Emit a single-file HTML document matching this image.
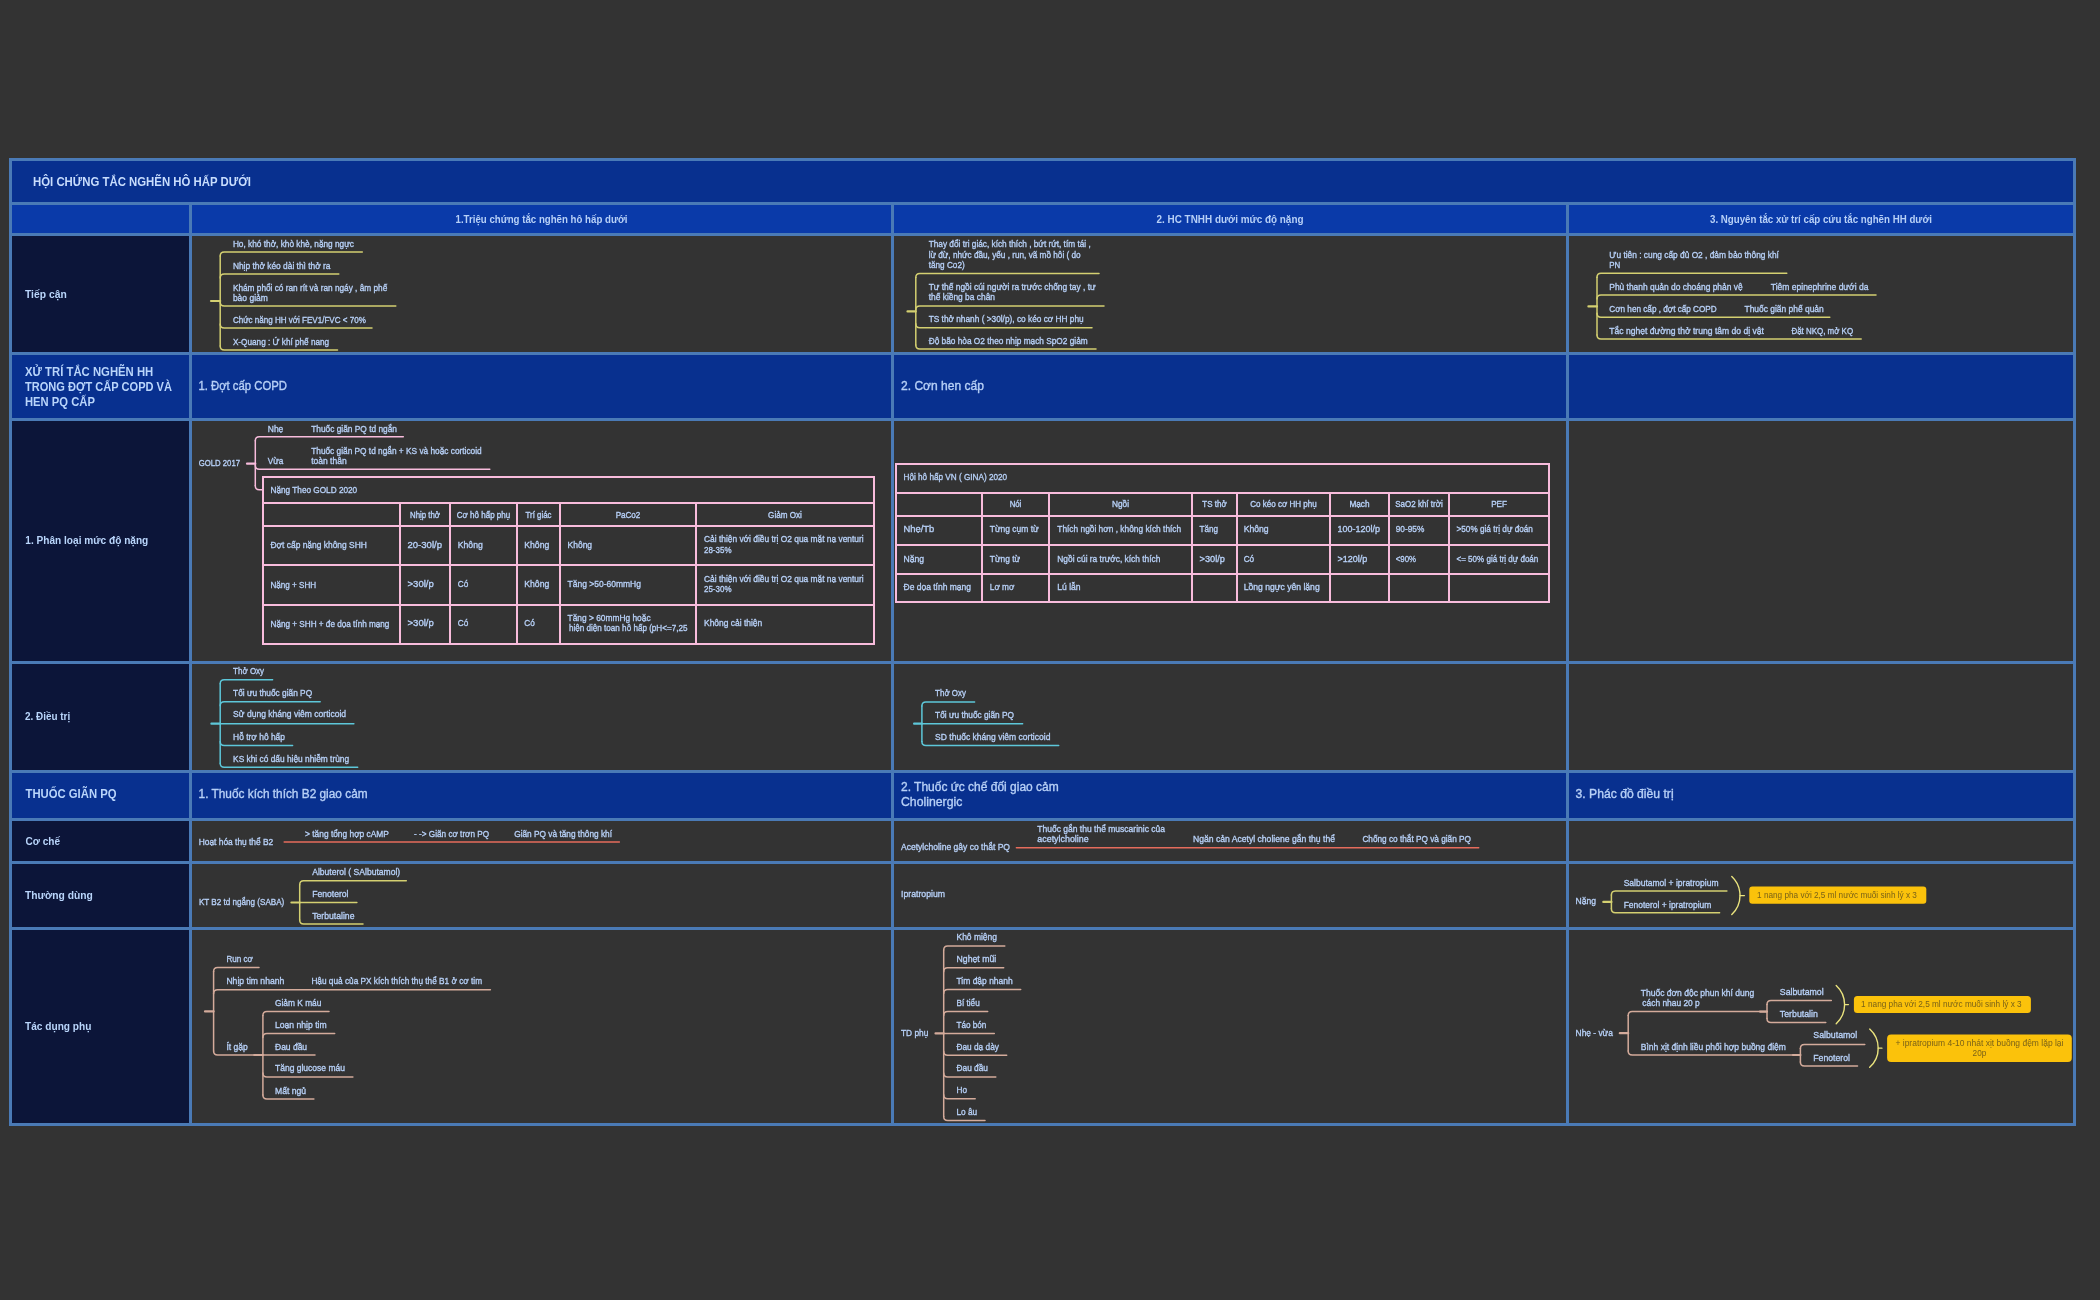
<!DOCTYPE html>
<html><head><meta charset="utf-8"><title>Hội chứng tắc nghẽn hô hấp dưới</title>
<style>
html,body{margin:0;padding:0;background:#333333;width:2100px;height:1300px;overflow:hidden}
svg{position:absolute;left:0;top:0;display:block;will-change:transform}
text{font-family:"Liberation Sans",sans-serif;fill:#b7d0f7;stroke:#b7d0f7;stroke-width:0.35px}
</style></head><body>
<svg width="2100" height="1300" viewBox="0 0 2100 1300">
<rect x="12" y="161" width="2061" height="41" fill="#08308f"/>
<rect x="12" y="205" width="2061" height="28" fill="#0a3aa9"/>
<rect x="12" y="355" width="2061" height="63" fill="#08308f"/>
<rect x="12" y="773" width="2061" height="45" fill="#08308f"/>
<rect x="12" y="236" width="177" height="116" fill="#0c1539"/>
<rect x="12" y="421" width="177" height="240" fill="#0c1539"/>
<rect x="12" y="664" width="177" height="106" fill="#0c1539"/>
<rect x="12" y="821" width="177" height="40" fill="#0c1539"/>
<rect x="12" y="864" width="177" height="63" fill="#0c1539"/>
<rect x="12" y="930" width="177" height="193" fill="#0c1539"/>
<rect x="9" y="158" width="2067" height="3" fill="#4a7ab6"/>
<rect x="9" y="202" width="2067" height="3" fill="#4a7ab6"/>
<rect x="9" y="233" width="2067" height="3" fill="#4a7ab6"/>
<rect x="9" y="352" width="2067" height="3" fill="#4a7ab6"/>
<rect x="9" y="418" width="2067" height="3" fill="#4a7ab6"/>
<rect x="9" y="661" width="2067" height="3" fill="#4a7ab6"/>
<rect x="9" y="770" width="2067" height="3" fill="#4a7ab6"/>
<rect x="9" y="818" width="2067" height="3" fill="#4a7ab6"/>
<rect x="9" y="861" width="2067" height="3" fill="#4a7ab6"/>
<rect x="9" y="927" width="2067" height="3" fill="#4a7ab6"/>
<rect x="9" y="1123" width="2067" height="3" fill="#4a7ab6"/>
<rect x="9" y="158" width="3" height="968" fill="#4a7ab6"/>
<rect x="2073" y="158" width="3" height="968" fill="#4a7ab6"/>
<rect x="189" y="202" width="3" height="924" fill="#4a7ab6"/>
<rect x="891" y="202" width="3" height="924" fill="#4a7ab6"/>
<rect x="1566" y="202" width="3" height="924" fill="#4a7ab6"/>
<text x="33.00" y="186.00" font-size="12.5" font-weight="700" style="fill:#c8ddfd;stroke:#c8ddfd;stroke-width:0" textLength="218.0" lengthAdjust="spacingAndGlyphs">HỘI CHỨNG TẮC NGHẼN HÔ HẤP DƯỚI</text>
<text x="541.50" y="223.00" font-size="10" font-weight="700" text-anchor="middle" style="stroke-width:0" textLength="172.0" lengthAdjust="spacingAndGlyphs">1.Triệu chứng tắc nghẽn hô hấp dưới</text>
<text x="1230.00" y="223.00" font-size="10" font-weight="700" text-anchor="middle" style="stroke-width:0" textLength="147.0" lengthAdjust="spacingAndGlyphs">2. HC TNHH dưới mức độ nặng</text>
<text x="1821.00" y="223.00" font-size="10" font-weight="700" text-anchor="middle" style="stroke-width:0" textLength="222.0" lengthAdjust="spacingAndGlyphs">3. Nguyên tắc xử trí cấp cứu tắc nghẽn HH dưới</text>
<text x="25.00" y="298.00" font-size="11" font-weight="700" style="fill:#b9d5fb;stroke:#b9d5fb;stroke-width:0" textLength="41.7" lengthAdjust="spacingAndGlyphs">Tiếp cận</text>
<text x="25.00" y="376.00" font-size="12.3" font-weight="700" style="fill:#b9d5fb;stroke:#b9d5fb;stroke-width:0" textLength="128.3" lengthAdjust="spacingAndGlyphs">XỬ TRÍ TẮC NGHẼN HH</text>
<text x="25.00" y="390.70" font-size="12.3" font-weight="700" style="fill:#b9d5fb;stroke:#b9d5fb;stroke-width:0" textLength="147.0" lengthAdjust="spacingAndGlyphs">TRONG ĐỢT CẤP COPD VÀ</text>
<text x="25.00" y="405.70" font-size="12.3" font-weight="700" style="fill:#b9d5fb;stroke:#b9d5fb;stroke-width:0" textLength="69.9" lengthAdjust="spacingAndGlyphs">HEN PQ CẤP</text>
<text x="25.30" y="543.80" font-size="10.8" font-weight="700" style="fill:#b9d5fb;stroke:#b9d5fb;stroke-width:0" textLength="123.0" lengthAdjust="spacingAndGlyphs">1. Phân loại mức độ nặng</text>
<text x="25.00" y="719.80" font-size="11" font-weight="700" style="fill:#b9d5fb;stroke:#b9d5fb;stroke-width:0" textLength="45.2" lengthAdjust="spacingAndGlyphs">2. Điều trị</text>
<text x="25.50" y="798.40" font-size="12" font-weight="700" style="fill:#b9d5fb;stroke:#b9d5fb;stroke-width:0" textLength="91.0" lengthAdjust="spacingAndGlyphs">THUỐC GIÃN PQ</text>
<text x="25.50" y="845.00" font-size="11" font-weight="700" style="fill:#b9d5fb;stroke:#b9d5fb;stroke-width:0" textLength="34.5" lengthAdjust="spacingAndGlyphs">Cơ chế</text>
<text x="25.00" y="898.80" font-size="11" font-weight="700" style="fill:#b9d5fb;stroke:#b9d5fb;stroke-width:0" textLength="67.9" lengthAdjust="spacingAndGlyphs">Thường dùng</text>
<text x="25.00" y="1029.80" font-size="11" font-weight="700" style="fill:#b9d5fb;stroke:#b9d5fb;stroke-width:0" textLength="66.4" lengthAdjust="spacingAndGlyphs">Tác dụng phụ</text>
<text x="198.40" y="389.60" font-size="12" textLength="88.6" lengthAdjust="spacingAndGlyphs">1. Đợt cấp COPD</text>
<text x="901.00" y="389.70" font-size="12" textLength="82.9" lengthAdjust="spacingAndGlyphs">2. Cơn hen  cấp</text>
<text x="198.60" y="798.40" font-size="12" textLength="169.0" lengthAdjust="spacingAndGlyphs">1. Thuốc kích thích B2 giao cảm</text>
<text x="901.00" y="790.60" font-size="12" textLength="157.7" lengthAdjust="spacingAndGlyphs">2. Thuốc ức chế đối giao cảm</text>
<text x="901.00" y="805.70" font-size="12" textLength="61.4" lengthAdjust="spacingAndGlyphs">Cholinergic</text>
<text x="1575.60" y="798.20" font-size="12" textLength="98.0" lengthAdjust="spacingAndGlyphs">3. Phác đồ điều trị</text>
<path d="M211,301 L220.2,301" stroke="#d4d071" stroke-width="2.2" fill="none" stroke-linecap="round"/>
<path d="M220.2,256 L220.2,346" stroke="#d4d071" stroke-width="1.5" fill="none" stroke-linecap="round"/>
<path d="M220.2,256 Q220.2,252 224.2,252 L362.3,252" stroke="#d4d071" stroke-width="1.5" fill="none" stroke-linecap="round"/>
<path d="M220.2,278 Q220.2,274 224.2,274 L338.8,274" stroke="#d4d071" stroke-width="1.5" fill="none" stroke-linecap="round"/>
<path d="M220.2,302 Q220.2,306 224.2,306 L395.8,306" stroke="#d4d071" stroke-width="1.5" fill="none" stroke-linecap="round"/>
<path d="M220.2,324 Q220.2,328 224.2,328 L372,328" stroke="#d4d071" stroke-width="1.5" fill="none" stroke-linecap="round"/>
<path d="M220.2,346 Q220.2,350 224.2,350 L337.5,350" stroke="#d4d071" stroke-width="1.5" fill="none" stroke-linecap="round"/>
<text x="232.90" y="247.30" font-size="9.5" textLength="121.0" lengthAdjust="spacingAndGlyphs">Ho, khó thở, khò khè, nặng ngực</text>
<text x="232.90" y="269.00" font-size="9.5" textLength="97.6" lengthAdjust="spacingAndGlyphs">Nhịp thở kéo dài thì thở ra</text>
<text x="232.90" y="291.00" font-size="9.5" textLength="154.4" lengthAdjust="spacingAndGlyphs">Khám phổi có ran rít và ran ngáy , âm phế</text>
<text x="232.90" y="300.90" font-size="9.5" textLength="35.0" lengthAdjust="spacingAndGlyphs">bào giảm</text>
<text x="232.90" y="322.90" font-size="9.5" textLength="132.9" lengthAdjust="spacingAndGlyphs">Chức năng HH với FEV1/FVC &lt; 70%</text>
<text x="232.90" y="344.90" font-size="9.5" textLength="96.3" lengthAdjust="spacingAndGlyphs">X-Quang : Ứ khí phế nang</text>
<path d="M907.5,311.4 L915.8,311.4" stroke="#d4d071" stroke-width="2.2" fill="none" stroke-linecap="round"/>
<path d="M915.8,277.5 L915.8,345" stroke="#d4d071" stroke-width="1.5" fill="none" stroke-linecap="round"/>
<path d="M915.8,277.5 Q915.8,273.5 919.8,273.5 L1099,273.5" stroke="#d4d071" stroke-width="1.5" fill="none" stroke-linecap="round"/>
<path d="M915.8,310 Q915.8,306 919.8,306 L1104,306" stroke="#d4d071" stroke-width="1.5" fill="none" stroke-linecap="round"/>
<path d="M915.8,323.7 Q915.8,327.7 919.8,327.7 L1092,327.7" stroke="#d4d071" stroke-width="1.5" fill="none" stroke-linecap="round"/>
<path d="M915.8,345 Q915.8,349 919.8,349 L1096,349" stroke="#d4d071" stroke-width="1.5" fill="none" stroke-linecap="round"/>
<text x="928.70" y="247.00" font-size="9.5" textLength="162.0" lengthAdjust="spacingAndGlyphs">Thay đổi tri giác, kích thích , bứt rứt, tím tái ,</text>
<text x="928.70" y="257.70" font-size="9.5" textLength="152.0" lengthAdjust="spacingAndGlyphs">lừ đừ, nhức đầu, yếu , run, vã mồ hôi ( do</text>
<text x="928.70" y="267.50" font-size="9.5" textLength="36.0" lengthAdjust="spacingAndGlyphs">tăng Co2)</text>
<text x="928.70" y="290.20" font-size="9.5" textLength="167.0" lengthAdjust="spacingAndGlyphs">Tư thế ngồi cúi người ra trước chống tay , tư</text>
<text x="928.70" y="299.70" font-size="9.5" textLength="66.3" lengthAdjust="spacingAndGlyphs">thế kiềng ba chân</text>
<text x="928.70" y="321.70" font-size="9.5" textLength="155.0" lengthAdjust="spacingAndGlyphs">TS thở nhanh ( &gt;30l/p), co kéo cơ HH phụ</text>
<text x="928.70" y="343.70" font-size="9.5" textLength="159.0" lengthAdjust="spacingAndGlyphs">Độ bão hòa O2 theo nhịp mạch SpO2 giảm</text>
<path d="M1588.4,306.4 L1597,306.4" stroke="#d4d071" stroke-width="2.2" fill="none" stroke-linecap="round"/>
<path d="M1597,277.3 L1597,335" stroke="#d4d071" stroke-width="1.5" fill="none" stroke-linecap="round"/>
<path d="M1597,277.3 Q1597,273.3 1601,273.3 L1786.8,273.3" stroke="#d4d071" stroke-width="1.5" fill="none" stroke-linecap="round"/>
<path d="M1597,299.1 Q1597,295.1 1601,295.1 L1876,295.1" stroke="#d4d071" stroke-width="1.5" fill="none" stroke-linecap="round"/>
<path d="M1597,313.2 Q1597,317.2 1601,317.2 L1829.8,317.2" stroke="#d4d071" stroke-width="1.5" fill="none" stroke-linecap="round"/>
<path d="M1597,335 Q1597,339 1601,339 L1861.2,339" stroke="#d4d071" stroke-width="1.5" fill="none" stroke-linecap="round"/>
<text x="1609.30" y="258.10" font-size="9.5" textLength="169.6" lengthAdjust="spacingAndGlyphs">Ưu tiên : cung cấp đủ O2 , đảm bảo thông khí</text>
<text x="1609.30" y="267.50" font-size="9.5" textLength="11.0" lengthAdjust="spacingAndGlyphs">PN</text>
<text x="1609.30" y="289.60" font-size="9.5" textLength="133.3" lengthAdjust="spacingAndGlyphs">Phù thanh quản do choáng phản vệ</text>
<text x="1770.80" y="289.60" font-size="9.5" textLength="97.6" lengthAdjust="spacingAndGlyphs">Tiêm epinephrine dưới da</text>
<text x="1609.30" y="311.70" font-size="9.5" textLength="107.4" lengthAdjust="spacingAndGlyphs">Cơn hen cấp , đợt cấp COPD</text>
<text x="1744.50" y="311.70" font-size="9.5" textLength="79.2" lengthAdjust="spacingAndGlyphs">Thuốc giãn phế quản</text>
<text x="1609.30" y="333.50" font-size="9.5" textLength="154.7" lengthAdjust="spacingAndGlyphs">Tắc nghẹt đường thở trung tâm do dị vật</text>
<text x="1791.40" y="333.50" font-size="9.5" textLength="61.7" lengthAdjust="spacingAndGlyphs">Đặt NKQ, mở KQ</text>
<text x="198.70" y="465.80" font-size="9.5" textLength="41.3" lengthAdjust="spacingAndGlyphs">GOLD 2017</text>
<path d="M247,463.7 L255.3,463.7" stroke="#f8bcdc" stroke-width="2.2" fill="none" stroke-linecap="round"/>
<path d="M255.3,440.7 L255.3,485.7" stroke="#f8bcdc" stroke-width="1.5" fill="none" stroke-linecap="round"/>
<path d="M255.3,440.7 Q255.3,436.7 259.3,436.7 L403.3,436.7" stroke="#f8bcdc" stroke-width="1.5" fill="none" stroke-linecap="round"/>
<path d="M255.3,465.2 Q255.3,469.2 259.3,469.2 L489.8,469.2" stroke="#f8bcdc" stroke-width="1.5" fill="none" stroke-linecap="round"/>
<path d="M255.3,485.7 Q255.3,489.7 259.3,489.7 L262,489.7" stroke="#f8bcdc" stroke-width="1.5" fill="none" stroke-linecap="round"/>
<text x="267.80" y="432.00" font-size="9.5" textLength="15.5" lengthAdjust="spacingAndGlyphs">Nhẹ</text>
<text x="311.20" y="432.00" font-size="9.5" textLength="85.8" lengthAdjust="spacingAndGlyphs">Thuốc giãn PQ td ngắn</text>
<text x="267.80" y="464.00" font-size="9.5" textLength="15.5" lengthAdjust="spacingAndGlyphs">Vừa</text>
<text x="311.20" y="454.20" font-size="9.5" textLength="170.5" lengthAdjust="spacingAndGlyphs">Thuốc giãn PQ td ngắn + KS và hoặc corticoid</text>
<text x="311.20" y="464.20" font-size="9.5" textLength="35.5" lengthAdjust="spacingAndGlyphs">toàn thân</text>
<rect x="262" y="476" width="613" height="2" fill="#f8bcdc"/>
<rect x="262" y="502" width="613" height="2" fill="#f8bcdc"/>
<rect x="262" y="525" width="613" height="2" fill="#f8bcdc"/>
<rect x="262" y="564" width="613" height="2" fill="#f8bcdc"/>
<rect x="262" y="604" width="613" height="2" fill="#f8bcdc"/>
<rect x="262" y="643" width="613" height="2" fill="#f8bcdc"/>
<rect x="262" y="476" width="2" height="169" fill="#f8bcdc"/>
<rect x="873" y="476" width="2" height="169" fill="#f8bcdc"/>
<rect x="399" y="502" width="2" height="143" fill="#f8bcdc"/>
<rect x="449" y="502" width="2" height="143" fill="#f8bcdc"/>
<rect x="516" y="502" width="2" height="143" fill="#f8bcdc"/>
<rect x="559" y="502" width="2" height="143" fill="#f8bcdc"/>
<rect x="695" y="502" width="2" height="143" fill="#f8bcdc"/>
<text x="270.50" y="493.20" font-size="9.5" textLength="86.7" lengthAdjust="spacingAndGlyphs">Nặng Theo GOLD 2020</text>
<text x="425.00" y="518.10" font-size="8.5" text-anchor="middle" textLength="30.0" lengthAdjust="spacingAndGlyphs">Nhịp thở</text>
<text x="483.50" y="518.10" font-size="8.5" text-anchor="middle" textLength="53.4" lengthAdjust="spacingAndGlyphs">Cơ hô hấp phụ</text>
<text x="538.50" y="518.10" font-size="8.5" text-anchor="middle" textLength="25.9" lengthAdjust="spacingAndGlyphs">Trí giác</text>
<text x="628.00" y="518.10" font-size="8.5" text-anchor="middle" textLength="24.7" lengthAdjust="spacingAndGlyphs">PaCo2</text>
<text x="785.00" y="518.10" font-size="8.5" text-anchor="middle" textLength="33.8" lengthAdjust="spacingAndGlyphs">Giảm Oxi</text>
<text x="270.50" y="548.30" font-size="9.5" textLength="96.3" lengthAdjust="spacingAndGlyphs">Đợt cấp nặng không SHH</text>
<text x="407.50" y="547.50" font-size="9.5" textLength="34.5" lengthAdjust="spacingAndGlyphs">20-30l/p</text>
<text x="457.80" y="547.50" font-size="9.5" textLength="25.0" lengthAdjust="spacingAndGlyphs">Không</text>
<text x="524.30" y="547.50" font-size="9.5" textLength="25.0" lengthAdjust="spacingAndGlyphs">Không</text>
<text x="567.60" y="547.50" font-size="9.5" textLength="24.5" lengthAdjust="spacingAndGlyphs">Không</text>
<text x="704.00" y="541.50" font-size="9.5" textLength="159.6" lengthAdjust="spacingAndGlyphs">Cải thiện với điều trị O2 qua mặt nạ venturi</text>
<text x="704.00" y="552.50" font-size="9.5" textLength="27.5" lengthAdjust="spacingAndGlyphs">28-35%</text>
<text x="270.50" y="587.50" font-size="9.5" textLength="45.7" lengthAdjust="spacingAndGlyphs">Nặng + SHH</text>
<text x="407.50" y="586.70" font-size="9.5" textLength="26.3" lengthAdjust="spacingAndGlyphs">&gt;30l/p</text>
<text x="457.80" y="586.70" font-size="9.5" textLength="10.5" lengthAdjust="spacingAndGlyphs">Có</text>
<text x="524.30" y="586.70" font-size="9.5" textLength="25.0" lengthAdjust="spacingAndGlyphs">Không</text>
<text x="567.60" y="586.70" font-size="9.5" textLength="73.3" lengthAdjust="spacingAndGlyphs">Tăng &gt;50-60mmHg</text>
<text x="704.00" y="581.60" font-size="9.5" textLength="159.6" lengthAdjust="spacingAndGlyphs">Cải thiện với điều trị O2 qua mặt nạ venturi</text>
<text x="704.00" y="591.90" font-size="9.5" textLength="27.5" lengthAdjust="spacingAndGlyphs">25-30%</text>
<text x="270.50" y="626.50" font-size="9.5" textLength="118.9" lengthAdjust="spacingAndGlyphs">Nặng + SHH + đe dọa tính mạng</text>
<text x="407.50" y="625.70" font-size="9.5" textLength="26.3" lengthAdjust="spacingAndGlyphs">&gt;30l/p</text>
<text x="457.80" y="625.70" font-size="9.5" textLength="10.5" lengthAdjust="spacingAndGlyphs">Có</text>
<text x="524.30" y="625.70" font-size="9.5" textLength="10.5" lengthAdjust="spacingAndGlyphs">Có</text>
<text x="567.60" y="621.00" font-size="9.5" textLength="83.0" lengthAdjust="spacingAndGlyphs">Tăng &gt; 60mmHg hoặc</text>
<text x="569.00" y="631.20" font-size="9.5" textLength="118.4" lengthAdjust="spacingAndGlyphs">hiện diện toan hô hấp (pH&lt;=7,25</text>
<text x="704.00" y="625.70" font-size="9.5" textLength="58.2" lengthAdjust="spacingAndGlyphs">Không cải thiện</text>
<rect x="895" y="463" width="655" height="2" fill="#f8bcdc"/>
<rect x="895" y="492" width="655" height="2" fill="#f8bcdc"/>
<rect x="895" y="515" width="655" height="2" fill="#f8bcdc"/>
<rect x="895" y="544" width="655" height="2" fill="#f8bcdc"/>
<rect x="895" y="573" width="655" height="2" fill="#f8bcdc"/>
<rect x="895" y="601" width="655" height="2" fill="#f8bcdc"/>
<rect x="895" y="463" width="2" height="140" fill="#f8bcdc"/>
<rect x="1548" y="463" width="2" height="140" fill="#f8bcdc"/>
<rect x="981" y="492" width="2" height="111" fill="#f8bcdc"/>
<rect x="1048" y="492" width="2" height="111" fill="#f8bcdc"/>
<rect x="1191" y="492" width="2" height="111" fill="#f8bcdc"/>
<rect x="1236" y="492" width="2" height="111" fill="#f8bcdc"/>
<rect x="1329" y="492" width="2" height="111" fill="#f8bcdc"/>
<rect x="1388" y="492" width="2" height="111" fill="#f8bcdc"/>
<rect x="1448" y="492" width="2" height="111" fill="#f8bcdc"/>
<text x="903.50" y="480.00" font-size="9.5" textLength="103.6" lengthAdjust="spacingAndGlyphs">Hội hô hấp VN ( GINA) 2020</text>
<text x="1015.50" y="506.80" font-size="8.5" text-anchor="middle" textLength="11.7" lengthAdjust="spacingAndGlyphs">Nói</text>
<text x="1120.50" y="506.80" font-size="8.5" text-anchor="middle" textLength="17.0" lengthAdjust="spacingAndGlyphs">Ngồi</text>
<text x="1214.50" y="506.80" font-size="8.5" text-anchor="middle" textLength="24.3" lengthAdjust="spacingAndGlyphs">TS thở</text>
<text x="1283.50" y="506.80" font-size="8.5" text-anchor="middle" textLength="66.4" lengthAdjust="spacingAndGlyphs">Co kéo cơ HH phụ</text>
<text x="1359.50" y="506.80" font-size="8.5" text-anchor="middle" textLength="20.1" lengthAdjust="spacingAndGlyphs">Mạch</text>
<text x="1419.00" y="506.80" font-size="8.5" text-anchor="middle" textLength="47.4" lengthAdjust="spacingAndGlyphs">SaO2 khí trời</text>
<text x="1499.00" y="506.80" font-size="8.5" text-anchor="middle" textLength="15.7" lengthAdjust="spacingAndGlyphs">PEF</text>
<text x="903.50" y="532.40" font-size="9.5" textLength="30.8" lengthAdjust="spacingAndGlyphs">Nhẹ/Tb</text>
<text x="989.80" y="532.40" font-size="9.5" textLength="48.9" lengthAdjust="spacingAndGlyphs">Từng cụm từ</text>
<text x="1057.30" y="532.40" font-size="9.5" textLength="123.9" lengthAdjust="spacingAndGlyphs">Thích ngồi hơn , không kích thích</text>
<text x="1199.50" y="532.40" font-size="9.5" textLength="18.6" lengthAdjust="spacingAndGlyphs">Tăng</text>
<text x="1243.70" y="532.40" font-size="9.5" textLength="25.0" lengthAdjust="spacingAndGlyphs">Không</text>
<text x="1337.40" y="532.40" font-size="9.5" textLength="42.5" lengthAdjust="spacingAndGlyphs">100-120l/p</text>
<text x="1395.70" y="532.40" font-size="9.5" textLength="28.6" lengthAdjust="spacingAndGlyphs">90-95%</text>
<text x="1456.50" y="532.40" font-size="9.5" textLength="76.4" lengthAdjust="spacingAndGlyphs">&gt;50% giá trị dự đoán</text>
<text x="903.50" y="561.50" font-size="9.5" textLength="20.6" lengthAdjust="spacingAndGlyphs">Nặng</text>
<text x="989.80" y="561.50" font-size="9.5" textLength="30.3" lengthAdjust="spacingAndGlyphs">Từng từ</text>
<text x="1057.30" y="561.50" font-size="9.5" textLength="103.1" lengthAdjust="spacingAndGlyphs">Ngồi cúi ra trước, kích thích</text>
<text x="1199.50" y="561.50" font-size="9.5" textLength="25.4" lengthAdjust="spacingAndGlyphs">&gt;30l/p</text>
<text x="1243.70" y="561.50" font-size="9.5" textLength="10.5" lengthAdjust="spacingAndGlyphs">Có</text>
<text x="1337.40" y="561.50" font-size="9.5" textLength="29.9" lengthAdjust="spacingAndGlyphs">&gt;120l/p</text>
<text x="1395.70" y="561.50" font-size="9.5" textLength="20.4" lengthAdjust="spacingAndGlyphs">&lt;90%</text>
<text x="1456.50" y="561.50" font-size="9.5" textLength="81.8" lengthAdjust="spacingAndGlyphs">&lt;= 50% giá trị dự đoán</text>
<text x="903.50" y="590.40" font-size="9.5" textLength="67.5" lengthAdjust="spacingAndGlyphs">Đe dọa tính mạng</text>
<text x="989.80" y="590.40" font-size="9.5" textLength="24.6" lengthAdjust="spacingAndGlyphs">Lơ mơ</text>
<text x="1057.30" y="590.40" font-size="9.5" textLength="23.2" lengthAdjust="spacingAndGlyphs">Lú lẫn</text>
<text x="1243.70" y="590.40" font-size="9.5" textLength="76.0" lengthAdjust="spacingAndGlyphs">Lồng ngực yên lặng</text>
<path d="M211.4,723.7 L220.2,723.7" stroke="#5dc7d9" stroke-width="2.2" fill="none" stroke-linecap="round"/>
<path d="M220.2,683.8 L220.2,763.2" stroke="#5dc7d9" stroke-width="1.5" fill="none" stroke-linecap="round"/>
<path d="M220.2,683.8 Q220.2,679.8 224.2,679.8 L272.6,679.8" stroke="#5dc7d9" stroke-width="1.5" fill="none" stroke-linecap="round"/>
<path d="M220.2,705.8 Q220.2,701.8 224.2,701.8 L320.2,701.8" stroke="#5dc7d9" stroke-width="1.5" fill="none" stroke-linecap="round"/>
<path d="M220.2,723.7 L353.9,723.7" stroke="#5dc7d9" stroke-width="1.5" fill="none" stroke-linecap="round"/>
<path d="M220.2,741.6 Q220.2,745.6 224.2,745.6 L292.6,745.6" stroke="#5dc7d9" stroke-width="1.5" fill="none" stroke-linecap="round"/>
<path d="M220.2,763.2 Q220.2,767.2 224.2,767.2 L357.7,767.2" stroke="#5dc7d9" stroke-width="1.5" fill="none" stroke-linecap="round"/>
<text x="233.10" y="673.90" font-size="9.5" textLength="31.0" lengthAdjust="spacingAndGlyphs">Thở Oxy</text>
<text x="233.10" y="695.50" font-size="9.5" textLength="79.0" lengthAdjust="spacingAndGlyphs">Tối ưu thuốc giãn PQ</text>
<text x="233.10" y="717.40" font-size="9.5" textLength="113.0" lengthAdjust="spacingAndGlyphs">Sử dụng kháng viêm corticoid</text>
<text x="233.10" y="739.60" font-size="9.5" textLength="51.9" lengthAdjust="spacingAndGlyphs">Hỗ trợ hô hấp</text>
<text x="233.10" y="761.50" font-size="9.5" textLength="116.0" lengthAdjust="spacingAndGlyphs">KS khi có dấu hiệu nhiễm trùng</text>
<path d="M914.1,723.7 L921.9,723.7" stroke="#5dc7d9" stroke-width="2.2" fill="none" stroke-linecap="round"/>
<path d="M921.9,706 L921.9,741.5" stroke="#5dc7d9" stroke-width="1.5" fill="none" stroke-linecap="round"/>
<path d="M921.9,706 Q921.9,702 925.9,702 L974.6,702" stroke="#5dc7d9" stroke-width="1.5" fill="none" stroke-linecap="round"/>
<path d="M921.9,723.7 L1022.6,723.7" stroke="#5dc7d9" stroke-width="1.5" fill="none" stroke-linecap="round"/>
<path d="M921.9,741.5 Q921.9,745.5 925.9,745.5 L1058.7,745.5" stroke="#5dc7d9" stroke-width="1.5" fill="none" stroke-linecap="round"/>
<text x="935.10" y="696.00" font-size="9.5" textLength="30.9" lengthAdjust="spacingAndGlyphs">Thở Oxy</text>
<text x="935.10" y="717.70" font-size="9.5" textLength="78.9" lengthAdjust="spacingAndGlyphs">Tối ưu thuốc giãn PQ</text>
<text x="935.10" y="739.50" font-size="9.5" textLength="115.3" lengthAdjust="spacingAndGlyphs">SD thuốc kháng viêm corticoid</text>
<text x="198.70" y="844.80" font-size="9.5" textLength="74.6" lengthAdjust="spacingAndGlyphs">Hoạt hóa thụ thể B2</text>
<path d="M284.2,842.1 L619.4,842.1" stroke="#e66c5c" stroke-width="1.5" fill="none" stroke-linecap="round"/>
<text x="305.10" y="836.90" font-size="9.5" textLength="83.8" lengthAdjust="spacingAndGlyphs">&gt; tăng tổng hợp cAMP</text>
<text x="414.10" y="836.90" font-size="9.5" textLength="75.0" lengthAdjust="spacingAndGlyphs">- -&gt; Giãn cơ trơn PQ</text>
<text x="514.20" y="836.90" font-size="9.5" textLength="97.8" lengthAdjust="spacingAndGlyphs">Giãn PQ và tăng thông khí</text>
<text x="901.00" y="849.80" font-size="9.5" textLength="109.0" lengthAdjust="spacingAndGlyphs">Acetylcholine gây co thắt PQ</text>
<path d="M1016.4,847.7 L1478.7,847.7" stroke="#e66c5c" stroke-width="1.5" fill="none" stroke-linecap="round"/>
<text x="1037.30" y="832.20" font-size="9.5" textLength="127.7" lengthAdjust="spacingAndGlyphs">Thuốc gắn thu thể muscarinic của</text>
<text x="1037.30" y="842.20" font-size="9.5" textLength="51.4" lengthAdjust="spacingAndGlyphs">acetylcholine</text>
<text x="1193.00" y="842.20" font-size="9.5" textLength="142.0" lengthAdjust="spacingAndGlyphs">Ngăn cản Acetyl choliene gắn thụ thể</text>
<text x="1362.40" y="842.20" font-size="9.5" textLength="108.6" lengthAdjust="spacingAndGlyphs">Chống co thắt PQ và giãn PQ</text>
<text x="198.90" y="904.60" font-size="9.5" textLength="85.4" lengthAdjust="spacingAndGlyphs">KT B2 td ngắng (SABA)</text>
<path d="M291.4,902.5 L299.7,902.5" stroke="#d4d071" stroke-width="2.2" fill="none" stroke-linecap="round"/>
<path d="M299.7,884.7 L299.7,920.1" stroke="#d4d071" stroke-width="1.5" fill="none" stroke-linecap="round"/>
<path d="M299.7,884.7 Q299.7,880.7 303.7,880.7 L406.3,880.7" stroke="#d4d071" stroke-width="1.5" fill="none" stroke-linecap="round"/>
<path d="M299.7,902.5 L356.9,902.5" stroke="#d4d071" stroke-width="1.5" fill="none" stroke-linecap="round"/>
<path d="M299.7,920.1 Q299.7,924.1 303.7,924.1 L363,924.1" stroke="#d4d071" stroke-width="1.5" fill="none" stroke-linecap="round"/>
<text x="312.20" y="874.50" font-size="9.5" textLength="88.0" lengthAdjust="spacingAndGlyphs">Albuterol ( SAlbutamol)</text>
<text x="312.20" y="896.80" font-size="9.5" textLength="36.3" lengthAdjust="spacingAndGlyphs">Fenoterol</text>
<text x="312.20" y="918.50" font-size="9.5" textLength="42.3" lengthAdjust="spacingAndGlyphs">Terbutaline</text>
<text x="901.00" y="896.80" font-size="9.5" textLength="44.0" lengthAdjust="spacingAndGlyphs">Ipratropium</text>
<text x="1575.60" y="904.30" font-size="9.5" textLength="20.4" lengthAdjust="spacingAndGlyphs">Nặng</text>
<path d="M1603.3,901.9 L1611.4,901.9" stroke="#d4d071" stroke-width="2.2" fill="none" stroke-linecap="round"/>
<path d="M1611.4,895.1 L1611.4,908.8" stroke="#d4d071" stroke-width="1.5" fill="none" stroke-linecap="round"/>
<path d="M1611.4,895.1 Q1611.4,891.1 1615.4,891.1 L1726.9,891.1" stroke="#d4d071" stroke-width="1.5" fill="none" stroke-linecap="round"/>
<path d="M1611.4,908.8 Q1611.4,912.8 1615.4,912.8 L1719.6,912.8" stroke="#d4d071" stroke-width="1.5" fill="none" stroke-linecap="round"/>
<text x="1623.70" y="886.00" font-size="9.5" textLength="94.8" lengthAdjust="spacingAndGlyphs">Salbutamol + ipratropium</text>
<text x="1623.70" y="907.70" font-size="9.5" textLength="87.6" lengthAdjust="spacingAndGlyphs">Fenoterol + ipratropium</text>
<path d="M1731.8,876.6 A26.11,26.11 0 0 1 1731.8,914.6" stroke="#ebe47e" stroke-width="1.4" fill="none" stroke-linecap="round"/>
<path d="M1740,895.6 L1744.4,895.6" stroke="#ebe47e" stroke-width="1.4" fill="none" stroke-linecap="round"/>
<rect x="1749.3" y="886.4" width="177" height="17.3" rx="3" fill="#fbc20b"/>
<text x="1757.10" y="897.90" font-size="9.5" style="fill:#7a6218;stroke:#7a6218;stroke-width:0" textLength="159.8" lengthAdjust="spacingAndGlyphs">1 nang pha với 2,5 ml nước muối sinh lý x 3</text>
<path d="M205,1011.4 L213.6,1011.4" stroke="#d4ab9b" stroke-width="2.2" fill="none" stroke-linecap="round"/>
<path d="M213.6,971.6 L213.6,1051" stroke="#d4ab9b" stroke-width="1.5" fill="none" stroke-linecap="round"/>
<path d="M213.6,971.6 Q213.6,967.6 217.6,967.6 L259,967.6" stroke="#d4ab9b" stroke-width="1.5" fill="none" stroke-linecap="round"/>
<path d="M213.6,993.7 Q213.6,989.7 217.6,989.7 L490.4,989.7" stroke="#d4ab9b" stroke-width="1.5" fill="none" stroke-linecap="round"/>
<path d="M213.6,1051 Q213.6,1055 217.6,1055 L262.9,1055" stroke="#d4ab9b" stroke-width="1.5" fill="none" stroke-linecap="round"/>
<text x="226.40" y="962.10" font-size="9.5" textLength="26.4" lengthAdjust="spacingAndGlyphs">Run cơ</text>
<text x="226.40" y="984.00" font-size="9.5" textLength="57.9" lengthAdjust="spacingAndGlyphs">Nhịp tim nhanh</text>
<text x="311.40" y="984.00" font-size="9.5" textLength="170.7" lengthAdjust="spacingAndGlyphs">Hậu quả của PX kích thích thụ thể B1 ở cơ tim</text>
<text x="226.40" y="1050.00" font-size="9.5" textLength="21.4" lengthAdjust="spacingAndGlyphs">Ít gặp</text>
<path d="M254.3,1055 L262.9,1055" stroke="#d4ab9b" stroke-width="2.2" fill="none" stroke-linecap="round"/>
<path d="M262.9,1015.4 L262.9,1094.9" stroke="#d4ab9b" stroke-width="1.5" fill="none" stroke-linecap="round"/>
<path d="M262.9,1015.4 Q262.9,1011.4 266.9,1011.4 L329,1011.4" stroke="#d4ab9b" stroke-width="1.5" fill="none" stroke-linecap="round"/>
<path d="M262.9,1037.6 Q262.9,1033.6 266.9,1033.6 L334.7,1033.6" stroke="#d4ab9b" stroke-width="1.5" fill="none" stroke-linecap="round"/>
<path d="M262.9,1055 L315,1055" stroke="#d4ab9b" stroke-width="1.5" fill="none" stroke-linecap="round"/>
<path d="M262.9,1073.1 Q262.9,1077.1 266.9,1077.1 L352.9,1077.1" stroke="#d4ab9b" stroke-width="1.5" fill="none" stroke-linecap="round"/>
<path d="M262.9,1094.9 Q262.9,1098.9 266.9,1098.9 L313.9,1098.9" stroke="#d4ab9b" stroke-width="1.5" fill="none" stroke-linecap="round"/>
<text x="275.00" y="1005.70" font-size="9.5" textLength="46.4" lengthAdjust="spacingAndGlyphs">Giảm K máu</text>
<text x="275.00" y="1027.90" font-size="9.5" textLength="51.7" lengthAdjust="spacingAndGlyphs">Loạn nhịp tim</text>
<text x="275.00" y="1050.00" font-size="9.5" textLength="32.1" lengthAdjust="spacingAndGlyphs">Đau đầu</text>
<text x="275.00" y="1071.40" font-size="9.5" textLength="70.0" lengthAdjust="spacingAndGlyphs">Tăng glucose máu</text>
<text x="275.00" y="1093.60" font-size="9.5" textLength="31.1" lengthAdjust="spacingAndGlyphs">Mất ngủ</text>
<text x="901.00" y="1035.70" font-size="9.5" textLength="27.3" lengthAdjust="spacingAndGlyphs">TD phụ</text>
<path d="M935.5,1033.4 L943.7,1033.4" stroke="#d4ab9b" stroke-width="2.2" fill="none" stroke-linecap="round"/>
<path d="M943.7,950 L943.7,1116.4" stroke="#d4ab9b" stroke-width="1.5" fill="none" stroke-linecap="round"/>
<path d="M943.7,950 Q943.7,946 947.7,946 L1004.8,946" stroke="#d4ab9b" stroke-width="1.5" fill="none" stroke-linecap="round"/>
<path d="M943.7,971.7 Q943.7,967.7 947.7,967.7 L1003.7,967.7" stroke="#d4ab9b" stroke-width="1.5" fill="none" stroke-linecap="round"/>
<path d="M943.7,993.5 Q943.7,989.5 947.7,989.5 L1020.7,989.5" stroke="#d4ab9b" stroke-width="1.5" fill="none" stroke-linecap="round"/>
<path d="M943.7,1015.5 Q943.7,1011.5 947.7,1011.5 L987.7,1011.5" stroke="#d4ab9b" stroke-width="1.5" fill="none" stroke-linecap="round"/>
<path d="M943.7,1033.4 L994.3,1033.4" stroke="#d4ab9b" stroke-width="1.5" fill="none" stroke-linecap="round"/>
<path d="M943.7,1051.2 Q943.7,1055.2 947.7,1055.2 L1006.7,1055.2" stroke="#d4ab9b" stroke-width="1.5" fill="none" stroke-linecap="round"/>
<path d="M943.7,1073 Q943.7,1077 947.7,1077 L995.8,1077" stroke="#d4ab9b" stroke-width="1.5" fill="none" stroke-linecap="round"/>
<path d="M943.7,1094.7 Q943.7,1098.7 947.7,1098.7 L975.2,1098.7" stroke="#d4ab9b" stroke-width="1.5" fill="none" stroke-linecap="round"/>
<path d="M943.7,1116.4 Q943.7,1120.4 947.7,1120.4 L985,1120.4" stroke="#d4ab9b" stroke-width="1.5" fill="none" stroke-linecap="round"/>
<text x="956.50" y="940.30" font-size="9.5" textLength="40.5" lengthAdjust="spacingAndGlyphs">Khô miệng</text>
<text x="956.50" y="962.00" font-size="9.5" textLength="39.7" lengthAdjust="spacingAndGlyphs">Nghẹt mũi</text>
<text x="956.50" y="983.80" font-size="9.5" textLength="56.2" lengthAdjust="spacingAndGlyphs">Tim đập nhanh</text>
<text x="956.50" y="1005.80" font-size="9.5" textLength="23.2" lengthAdjust="spacingAndGlyphs">Bí tiểu</text>
<text x="956.50" y="1027.70" font-size="9.5" textLength="29.7" lengthAdjust="spacingAndGlyphs">Táo bón</text>
<text x="956.50" y="1049.50" font-size="9.5" textLength="42.4" lengthAdjust="spacingAndGlyphs">Đau dạ dày</text>
<text x="956.50" y="1071.30" font-size="9.5" textLength="31.5" lengthAdjust="spacingAndGlyphs">Đau đầu</text>
<text x="956.50" y="1093.00" font-size="9.5" textLength="10.5" lengthAdjust="spacingAndGlyphs">Ho</text>
<text x="956.50" y="1114.70" font-size="9.5" textLength="20.7" lengthAdjust="spacingAndGlyphs">Lo âu</text>
<text x="1575.60" y="1035.60" font-size="9.5" textLength="37.3" lengthAdjust="spacingAndGlyphs">Nhẹ - vừa</text>
<path d="M1619.8,1033.2 L1628.2,1033.2" stroke="#d4ab9b" stroke-width="2.2" fill="none" stroke-linecap="round"/>
<path d="M1628.2,1015.6 L1628.2,1051" stroke="#d4ab9b" stroke-width="1.5" fill="none" stroke-linecap="round"/>
<path d="M1628.2,1015.6 Q1628.2,1011.6 1632.2,1011.6 L1767,1011.6" stroke="#d4ab9b" stroke-width="1.5" fill="none" stroke-linecap="round"/>
<path d="M1628.2,1051 Q1628.2,1055 1632.2,1055 L1800.4,1055" stroke="#d4ab9b" stroke-width="1.5" fill="none" stroke-linecap="round"/>
<text x="1640.80" y="995.60" font-size="9.5" textLength="113.4" lengthAdjust="spacingAndGlyphs">Thuốc đơn độc phun khí dung</text>
<text x="1642.30" y="1005.50" font-size="9.5" textLength="57.5" lengthAdjust="spacingAndGlyphs">cách nhau 20 p</text>
<text x="1640.80" y="1049.70" font-size="9.5" textLength="145.1" lengthAdjust="spacingAndGlyphs">Bình xịt định liều phối hợp buồng điệm</text>
<path d="M1760,1011.6 L1767,1011.6" stroke="#d4ab9b" stroke-width="2.2" fill="none" stroke-linecap="round"/>
<path d="M1767,1004.6 L1767,1018.5" stroke="#d4ab9b" stroke-width="1.5" fill="none" stroke-linecap="round"/>
<path d="M1767,1004.6 Q1767,1000.6 1771,1000.6 L1831.3,1000.6" stroke="#d4ab9b" stroke-width="1.5" fill="none" stroke-linecap="round"/>
<path d="M1767,1018.5 Q1767,1022.5 1771,1022.5 L1825.8,1022.5" stroke="#d4ab9b" stroke-width="1.5" fill="none" stroke-linecap="round"/>
<text x="1779.80" y="994.80" font-size="9.5" textLength="43.9" lengthAdjust="spacingAndGlyphs">Salbutamol</text>
<text x="1779.80" y="1016.90" font-size="9.5" textLength="38.1" lengthAdjust="spacingAndGlyphs">Terbutalin</text>
<path d="M1836.2,985.4 A26.14,26.14 0 0 1 1836.2,1023.8" stroke="#ebe47e" stroke-width="1.4" fill="none" stroke-linecap="round"/>
<path d="M1844.6,1004.5999999999999 L1848.4,1004.5999999999999" stroke="#ebe47e" stroke-width="1.4" fill="none" stroke-linecap="round"/>
<rect x="1853.9" y="996" width="177" height="17.1" rx="3.5" fill="#fbc20b"/>
<text x="1861.10" y="1007.10" font-size="9.5" style="fill:#7a6218;stroke:#7a6218;stroke-width:0" textLength="160.6" lengthAdjust="spacingAndGlyphs">1 nang pha với 2,5 ml nước muối sinh lý x 3</text>
<path d="M1793,1055 L1800.4,1055" stroke="#d4ab9b" stroke-width="2.2" fill="none" stroke-linecap="round"/>
<path d="M1800.4,1048.6 L1800.4,1062.1" stroke="#d4ab9b" stroke-width="1.5" fill="none" stroke-linecap="round"/>
<path d="M1800.4,1048.6 Q1800.4,1044.6 1804.4,1044.6 L1864.8,1044.6" stroke="#d4ab9b" stroke-width="1.5" fill="none" stroke-linecap="round"/>
<path d="M1800.4,1062.1 Q1800.4,1066.1 1804.4,1066.1 L1857.5,1066.1" stroke="#d4ab9b" stroke-width="1.5" fill="none" stroke-linecap="round"/>
<text x="1813.30" y="1038.20" font-size="9.5" textLength="43.9" lengthAdjust="spacingAndGlyphs">Salbutamol</text>
<text x="1813.30" y="1060.60" font-size="9.5" textLength="36.6" lengthAdjust="spacingAndGlyphs">Fenoterol</text>
<path d="M1869.7,1029.1 A25.60,25.60 0 0 1 1869.7,1067.2" stroke="#ebe47e" stroke-width="1.4" fill="none" stroke-linecap="round"/>
<path d="M1878.2,1048.15 L1881.9,1048.15" stroke="#ebe47e" stroke-width="1.4" fill="none" stroke-linecap="round"/>
<rect x="1887.1" y="1034.6" width="184.7" height="27.4" rx="4" fill="#fbc20b"/>
<text x="1979.45" y="1045.70" font-size="9.5" text-anchor="middle" style="fill:#7a6218;stroke:#7a6218;stroke-width:0" textLength="168.0" lengthAdjust="spacingAndGlyphs">+ ipratropium 4-10 nhát xịt buồng đệm lặp lại</text>
<text x="1979.45" y="1055.70" font-size="9.5" text-anchor="middle" style="fill:#7a6218;stroke:#7a6218;stroke-width:0" textLength="13.7" lengthAdjust="spacingAndGlyphs">20p</text>
</svg>
</body></html>
